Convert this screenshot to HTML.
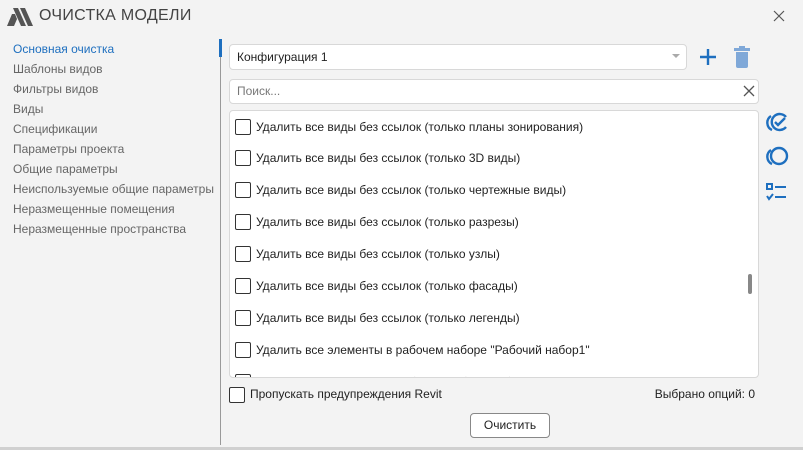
<!DOCTYPE html><html><head><meta charset="utf-8"><style>
*{box-sizing:border-box;margin:0;padding:0}
body{width:803px;height:450px;background:#f3f3f3;font-family:"Segoe UI","Liberation Sans",sans-serif;font-size:12px;color:#222;position:relative;overflow:hidden}
.a{position:absolute}
.nav div{position:absolute;left:13px;color:#666;font-size:12px;white-space:nowrap}
.cb{position:absolute;width:16px;height:16px;border:1px solid #333;background:#fff;border-radius:2px}
.row{position:absolute;left:0;height:20px}
.row span{position:absolute;left:21px;top:1px;white-space:nowrap;font-size:12px;color:#222}
</style></head><body>
<svg class="a" style="left:7px;top:8px" width="26" height="18" viewBox="0 0 26 18"><path d="M0 18 L5 6 L8 6 L10 11 L7 18Z M6 0 L11 0 L19 18 L14 18Z M13 0 L18 0 L26 18 L21 18Z" fill="#555"/></svg>
<div class="a" style="left:39px;top:7px;font-size:16px;color:#444;letter-spacing:0.3px">ОЧИСТКА МОДЕЛИ</div>
<svg class="a" style="left:773px;top:10px" width="12" height="12"><path d="M1 1L11 11M11 1L1 11" stroke="#555" stroke-width="1.2"/></svg>
<div class="nav">
<div style="top:42px;color:#1e6fbf">Основная очистка</div>
<div style="top:62px">Шаблоны видов</div>
<div style="top:82px">Фильтры видов</div>
<div style="top:102px">Виды</div>
<div style="top:122px">Спецификации</div>
<div style="top:142px">Параметры проекта</div>
<div style="top:162px">Общие параметры</div>
<div style="top:182px">Неиспользуемые общие параметры</div>
<div style="top:202px">Неразмещенные помещения</div>
<div style="top:222px">Неразмещенные пространства</div>
</div>
<div class="a" style="left:220px;top:40px;width:1px;height:405px;background:#999"></div>
<div class="a" style="left:219px;top:39px;width:3px;height:18px;background:#1e6fbf"></div>
<div class="a" style="left:229px;top:44px;width:458px;height:26px;background:#fff;border:1px solid #d8d8d8;border-radius:4px"><span class="a" style="left:7px;top:5px">Конфигурация 1</span><span class="a" style="left:442px;top:9px;border:4px solid transparent;border-top:4px solid #aaa"></span></div>
<svg class="a" style="left:699px;top:48px" width="18" height="18"><path d="M9 1V17M1 9H17" stroke="#1e6fbf" stroke-width="2.4"/></svg>
<svg class="a" style="left:734px;top:46px" width="16" height="22"><rect x="0" y="2" width="16" height="3" fill="#7fa8d8"/><rect x="5" y="0" width="6" height="3" fill="#7fa8d8"/><path d="M2 6H14V20Q14 22 12 22H4Q2 22 2 20Z" fill="#7fa8d8"/></svg>
<div class="a" style="left:229px;top:79px;width:530px;height:25px;background:#fff;border:1px solid #d8d8d8;border-radius:4px"><span class="a" style="left:7px;top:4px;color:#777">Поиск...</span><svg class="a" style="left:513px;top:5px" width="12" height="12"><path d="M1 1L11 11M11 1L1 11" stroke="#555" stroke-width="1.3"/></svg></div>
<div class="a" style="left:229px;top:110px;width:530px;height:268px;background:#fff;border:1px solid #d8d8d8;border-radius:4px;overflow:hidden">
<div class="row" style="top:8px;left:5px"><div class="cb"></div><span>Удалить все виды без ссылок (только планы зонирования)</span></div>
<div class="row" style="top:39px;left:5px"><div class="cb"></div><span>Удалить все виды без ссылок (только 3D виды)</span></div>
<div class="row" style="top:71px;left:5px"><div class="cb"></div><span>Удалить все виды без ссылок (только чертежные виды)</span></div>
<div class="row" style="top:103px;left:5px"><div class="cb"></div><span>Удалить все виды без ссылок (только разрезы)</span></div>
<div class="row" style="top:135px;left:5px"><div class="cb"></div><span>Удалить все виды без ссылок (только узлы)</span></div>
<div class="row" style="top:167px;left:5px"><div class="cb"></div><span>Удалить все виды без ссылок (только фасады)</span></div>
<div class="row" style="top:199px;left:5px"><div class="cb"></div><span>Удалить все виды без ссылок (только легенды)</span></div>
<div class="row" style="top:231px;left:5px"><div class="cb"></div><span>Удалить все элементы в рабочем наборе "Рабочий набор1"</span></div>
<div class="row" style="top:263px;left:5px"><div class="cb"></div><span>Удалить все элементы в рабочем наборе "Общие уровни и сетки"</span></div>
<div class="a" style="left:518px;top:163px;width:4px;height:20px;background:#888;border-radius:2px"></div>
</div>
<svg class="a" style="left:766px;top:111px" width="24" height="22" fill="none" stroke="#1e6fbf" stroke-width="2.4"><path d="M5 5A8 8 0 0 0 6 19"/><path d="M20 6A8 8 0 1 0 20 16"/><path d="M9 11L12 14L19 7"/></svg>
<svg class="a" style="left:766px;top:145px" width="24" height="22" fill="none" stroke="#1e6fbf" stroke-width="2.4"><path d="M5 5A8 8 0 0 0 6 19"/><circle cx="13" cy="11" r="8"/></svg>
<svg class="a" style="left:766px;top:183px" width="24" height="20" fill="none" stroke="#1e6fbf" stroke-width="2"><rect x="1" y="1" width="5" height="5"/><path d="M9 4H20M9 14H20M1 13L3 16L7 11"/></svg>
<div class="cb" style="left:229px;top:387px"></div>
<div class="a" style="left:250px;top:387px">Пропускать предупреждения Revit</div>
<div class="a" style="right:48px;top:387px">Выбрано опций: 0</div>
<div class="a" style="left:470px;top:413px;width:80px;height:25px;background:#fff;border:1px solid #888;border-radius:4px;text-align:center;line-height:23px">Очистить</div>
<div class="a" style="left:0;top:447px;width:803px;height:3px;background:#d0d0d0"></div>
</body></html>
